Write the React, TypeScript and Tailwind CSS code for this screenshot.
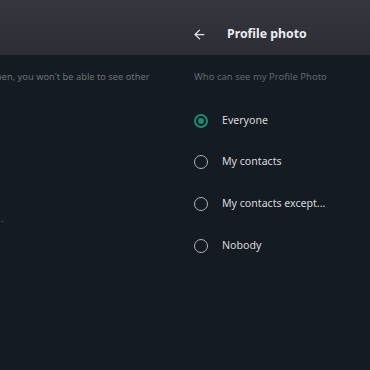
import { ArrowLeft } from 'lucide-react';

const options = [
  { label: 'Everyone', selected: true },
  { label: 'My contacts', selected: false },
  { label: 'My contacts except...', selected: false },
  { label: 'Nobody', selected: false },
];

function Radio({ selected }: { selected: boolean }) {
  return selected ? (
    <span className="w-[14px] h-[14px] rounded-full border-2 border-[#1c8a6e] flex items-center justify-center">
      <span className="w-[6px] h-[6px] rounded-full bg-[#1c8a6e]" />
    </span>
  ) : (
    <span className="w-[14px] h-[14px] rounded-full border-[1.5px] border-[#aeb3b8]" />
  );
}

export default function App() {
  return (
    <div className="w-[370px] h-[370px] flex bg-[#151b22] overflow-hidden font-['Noto_Sans',sans-serif]">
      {/* Left pane (cut off) */}
      <div className="w-[180px] shrink-0 flex flex-col">
        <div className="h-[55px] bg-gradient-to-b from-[#35363e] to-[#2d2e35]" />
        <div className="pt-[15px] whitespace-nowrap overflow-hidden">
          <p className="text-[9.3px] text-[#6c7278] -ml-[4px]">pen, you won't be able to see other</p>
          <p className="mt-[128px] text-[9.5px] text-[#6c7278] ml-[1px]">.</p>
        </div>
      </div>

      {/* Right pane */}
      <div className="flex-1 flex flex-col">
        <div className="h-[55px] bg-gradient-to-b from-[#35363e] to-[#2d2e35] flex items-center pl-[12px] pt-[14px]">
          <ArrowLeft size={15} strokeWidth={2} className="text-[#e2e5e8]" />
          <span className="ml-[20px] text-[12.3px] font-bold text-[#e9edef]">Profile photo</span>
        </div>
        <p className="pl-[14px] pt-[15px] text-[9.5px] text-[#5f6870] whitespace-nowrap">Who can see my Profile Photo</p>
        <ul className="pt-[28px] flex flex-col gap-[24.7px]">
          {options.map((o) => (
            <li key={o.label} className="flex items-center pl-[14px] h-[17px]">
              <Radio selected={o.selected} />
              <span className="ml-[14px] text-[10.6px] text-[#d6dadd] whitespace-nowrap">{o.label}</span>
            </li>
          ))}
        </ul>
      </div>
    </div>
  );
}
